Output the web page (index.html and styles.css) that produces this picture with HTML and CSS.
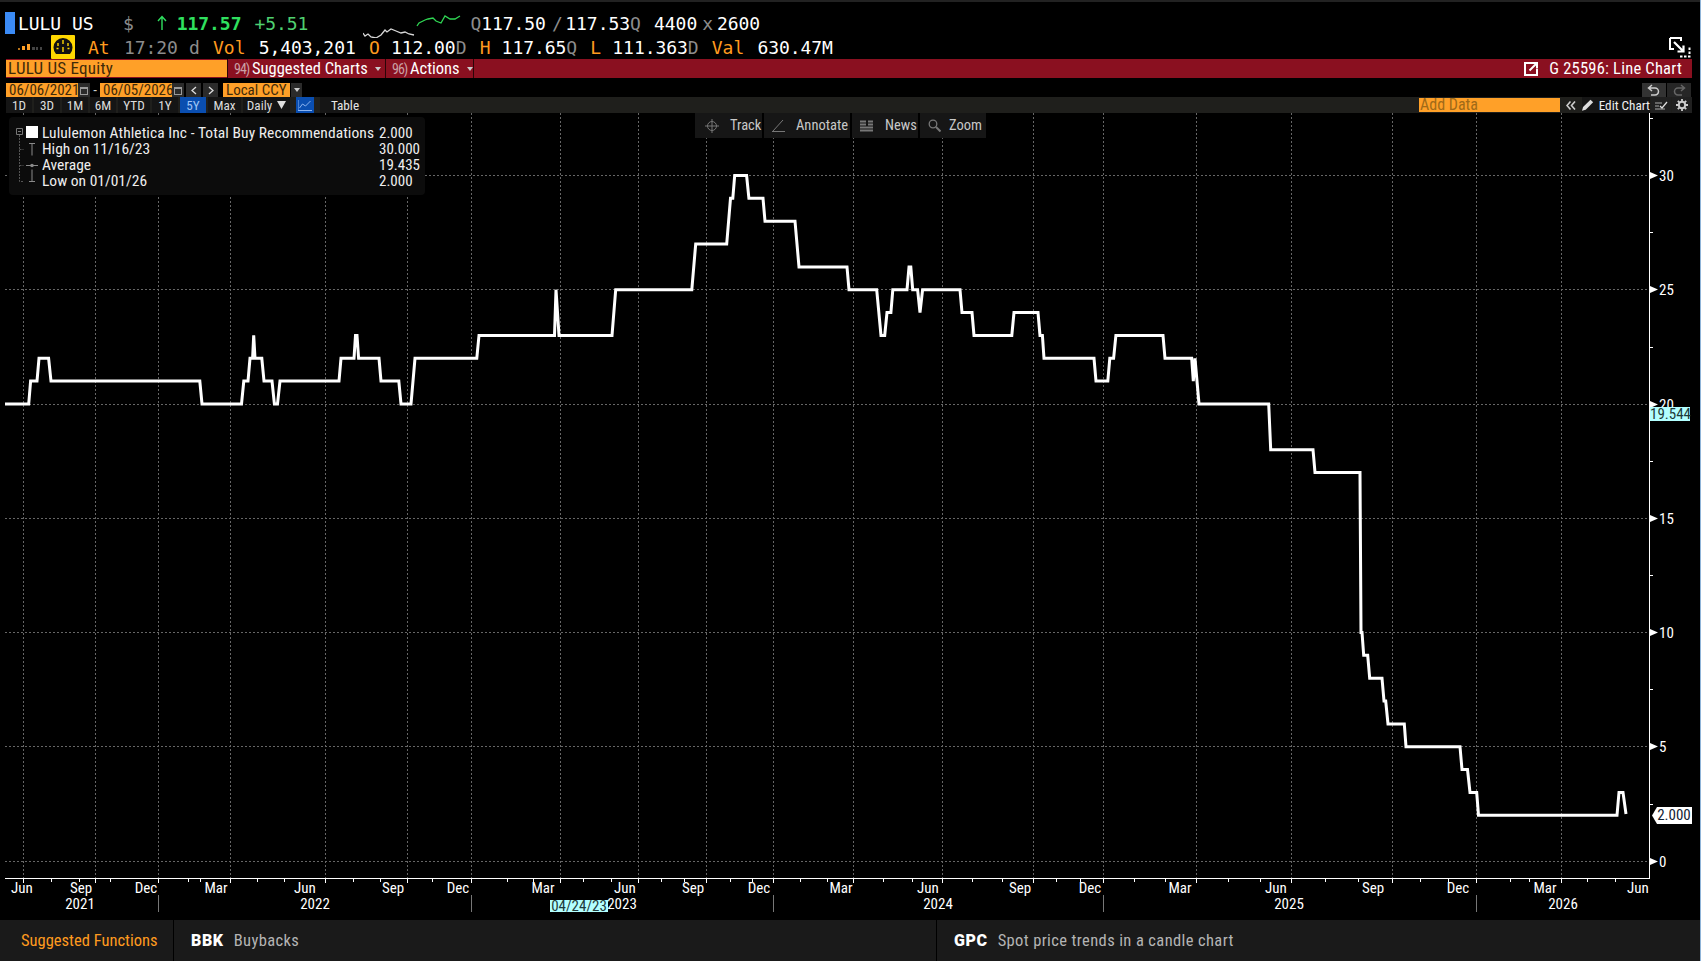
FILE: index.html
```html
<!DOCTYPE html>
<html lang="en">
<head>
<meta charset="UTF-8">
<title>LULU US Equity - Line Chart</title>
<link rel="stylesheet" href="styles.css">
</head>
<body>
<div class="page">
    <div class="top-strip"></div>

    <div class="quote-row first">
        <span class="sec-flag"></span>
        <span class="sym">LULU US</span>
        <span class="ccy dim">$</span>
        <svg class="up-arrow" width="10" height="16" viewBox="0 0 10 16"><path d="M5 15V1.500M1 6l4-4.500L9 6" fill="none" stroke="#2fe05f" stroke-width="1.400"/></svg>
        <span class="last">117.57</span>
        <span class="chg">+5.51</span>
        <svg class="spark" width="98" height="26" viewBox="364 6 98 26">
            <polyline fill="none" stroke="#d8d8d8" stroke-width="1.300" points="364,27 366,30 369,28 372,31 377,32 382,29 386,24 388,26 392,23 397,25 402,27 406,26 410,28 415,29"/>
            <polyline fill="none" stroke="#2fd653" stroke-width="1.300" points="418,20 420,17 426,14 429,13 434,12 437,15 442,17 446,10 451,13 456,13 461,10"/>
        </svg>
        <span class="bid-q dim">Q</span><span>117.50</span><span class="slash dim">/</span><span class="ask">117.53</span><span class="dim">Q</span>
        <span class="sp-md">4400</span><span class="times dim">x</span><span class="ask-size">2600</span>
    </div>

    <div class="quote-row second">
        <svg class="vol-bars" width="24" height="8" viewBox="0 0 24 8">
            <rect x="0" y="5" width="2" height="2" fill="#b8741a"/>
            <rect x="4" y="3" width="3" height="4" fill="#ffa028"/>
            <rect x="9" y="1" width="3" height="6" fill="#ffa028"/>
            <rect x="14" y="4" width="3" height="3" fill="#444"/>
            <rect x="18" y="4" width="2" height="3" fill="#444"/>
            <rect x="22" y="4" width="2" height="3" fill="#444"/>
        </svg>
        <svg class="gauge" width="24" height="24" viewBox="0 0 24 24">
            <rect width="24" height="24" rx="1" fill="#ffd800"/>
            <path d="M5 19a9.500 9.500 0 1 1 14 0z" fill="#111"/>
            <path d="M7 8v3M12 5v4M17 8v3M5.500 13.500h2M16.500 13.500h2M12 17l0-5" stroke="#ffd800" stroke-width="1.400" fill="none"/>
        </svg>
        <span class="amber at">At</span>
        <span class="dim time">17:20</span>
        <span class="dim sp-sm">d</span>
        <span class="amber sp-md">Vol</span>
        <span class="sp-md">5,403,201</span>
        <span class="amber sp-md">O</span>
        <span class="sp-sm">112.00</span><span class="dim">D</span>
        <span class="amber sp-md">H</span>
        <span class="sp-sm">117.65</span><span class="dim">Q</span>
        <span class="amber sp-md">L</span>
        <span class="sp-sm">111.363</span><span class="dim">D</span>
        <span class="amber sp-md">Val</span>
        <span class="sp-md">630.47M</span>
        <svg class="expand" width="22" height="21" viewBox="0 0 22 21">
            <path d="M1 1h11v3M1 1v11h4" fill="none" stroke="#fff" stroke-width="2"/>
            <path d="M5 5l9 9M14.500 8.500v6h-6" fill="none" stroke="#fff" stroke-width="2.200"/>
            <path d="M11 19.500h9.500V9" fill="none" stroke="#fff" stroke-width="2" stroke-dasharray="2.500 1.500"/>
        </svg>
    </div>

    <div class="red-bar">
        <div class="ticker-input">LULU US Equity</div>
        <div class="red-menu charts"><span class="num">94)</span>Suggested Charts<span class="caret"></span></div>
        <div class="red-menu actions"><span class="num">96)</span>Actions<span class="caret"></span></div>
        <div class="red-title">
            <svg width="14" height="14" viewBox="0 0 14 14"><path d="M0 0h8v2H2v10h10V7h2v7H0z" fill="#fff"/><path d="M5.500 8.500L12 2M7.500 1h5.500v5.500" fill="none" stroke="#fff" stroke-width="2"/></svg>
            <span>G 25596: Line Chart</span>
        </div>
    </div>

    <div class="date-row">
        <div class="amber-input date">06/06/2021</div>
        <div class="cal-btn"><svg width="8" height="9" viewBox="0 0 8 9"><path d="M0 1h8v8H0zM1 3v5h6V3z" fill="#9a9a9a" fill-rule="evenodd"/></svg></div>
        <span class="dash">-</span>
        <div class="amber-input date">06/05/2026</div>
        <div class="cal-btn"><svg width="8" height="9" viewBox="0 0 8 9"><path d="M0 1h8v8H0zM1 3v5h6V3z" fill="#9a9a9a" fill-rule="evenodd"/></svg></div>
        <div class="nav-btn"><svg width="6" height="9" viewBox="0 0 6 9"><path d="M5 1L1 4.500 5 8" fill="none" stroke="#ddd" stroke-width="1.300"/></svg></div>
        <div class="nav-btn"><svg width="6" height="9" viewBox="0 0 6 9"><path d="M1 1l4 3.500L1 8" fill="none" stroke="#ddd" stroke-width="1.300"/></svg></div>
        <div class="amber-input ccy-input">Local CCY</div>
        <div class="ccy-drop"><span class="caret"></span></div>
        <div class="hist-btns">
            <div class="hist-btn"><svg width="14" height="12" viewBox="0 0 14 12"><path d="M5 1L1.500 4 5 7M2 4h6a3.500 3.500 0 0 1 0 7H4" fill="none" stroke="#ccc" stroke-width="1.500"/></svg></div>
            <div class="hist-btn"><svg width="14" height="12" viewBox="0 0 14 12"><path d="M9 1l3.500 3L9 7M12 4H6a3.500 3.500 0 0 0 0 7h4" fill="none" stroke="#666" stroke-width="1.500"/></svg></div>
        </div>
    </div>

    <div class="tool-row">
        <div class="tf">1D</div>
        <div class="tf">3D</div>
        <div class="tf">1M</div>
        <div class="tf">6M</div>
        <div class="tf ytd">YTD</div>
        <div class="tf">1Y</div>
        <div class="tf on">5Y</div>
        <div class="tf max">Max</div>
        <div class="tf daily">Daily <svg width="9" height="8" viewBox="0 0 9 8"><path d="M0 0h9L4.500 8z" fill="#ddd"/></svg></div>
        <div class="tf on chart-type"><svg width="14" height="11" viewBox="0 0 14 11"><path d="M0 0v10.500h14" fill="none" stroke="#8cb4f0"/><path d="M1.500 8l3-4 3 2 5-5" fill="none" stroke="#8cb4f0"/></svg></div>
        <div class="tf table-btn">Table</div>
        <div class="add-data">Add Data</div>
        <div class="chevrons"><svg width="10" height="9" viewBox="0 0 10 9"><path d="M4.500 .5L1 4.500l3.500 4M9 .5L5.500 4.500 9 8.500" fill="none" stroke="#ccc" stroke-width="1.600"/></svg></div>
        <div class="tf edit-chart"><svg width="12" height="12" viewBox="0 0 11 11"><path d="M0 11l1-3.500L8 .5 10.500 3l-7 7z" fill="#ddd"/></svg>Edit Chart</div>
        <div class="tf icon-btn"><svg width="13" height="11" viewBox="0 0 13 11"><path d="M0 3h7M0 6h4M0 9h10" stroke="#aaa" fill="none"/><path d="M5 6l2 2 5-6" stroke="#ddd" fill="none" stroke-width="1.300"/></svg></div>
        <div class="tf icon-btn"><svg width="12" height="12" viewBox="0 0 12 12"><circle cx="6" cy="6" r="3.200" fill="none" stroke="#ccc" stroke-width="2"/><path d="M6 0v2.500M6 9.500V12M0 6h2.500M9.500 6H12M1.800 1.800l1.800 1.800M8.400 8.400l1.800 1.800M1.800 10.200l1.800-1.800M8.400 3.600l1.800-1.800" stroke="#ccc" stroke-width="1.800"/></svg></div>
    </div>

    <div class="chart">
        <svg class="plot" width="1701" height="807" viewBox="0 113 1701 807">
            <path class="grid" d="M23.500 113V878M95.500 113V878M158.500 113V878M230.500 113V878M325.500 113V878M407.500 113V878M471.500 113V878M560.500 113V878M638.500 113V878M706.500 113V878M773.500 113V878M853.500 113V878M942.500 113V878M1033.500 113V878M1103.500 113V878M1196.500 113V878M1291.500 113V878M1392.500 113V878M1476.500 113V878M1561.500 113V878"/>
            <path class="grid" d="M5 175.500H1649M5 289.500H1649M5 404.500H1649M5 518.500H1649M5 632.500H1649M5 746.500H1649M5 861.500H1649"/>

            <polyline class="series" points="5,404 28.700,404 30.600,381.100 37,381.100 39,358.300 48.600,358.300 51,381.100 199.800,381.100 202,404 241.500,404 243.800,381.100 248,381.100 250,358.300 252.600,358.300 253.700,335.400 255,358.300 261.800,358.300 264,381.100 272,381.100 274.400,404 277.500,404 280,381.100 339,381.100 341,358.300 354,358.300 355.500,335.400 357,335.400 358.600,358.300 379,358.300 381,381.100 398.800,381.100 401,404 411,404 415,358.300 476.800,358.300 479,335.400 554.500,335.400 556,289.700 559,335.400 612,335.400 615.700,289.700 691.800,289.700 695.700,244 726.700,244 730.500,198.300 732.800,198.300 734.700,175.500 746.600,175.500 748.900,198.300 763,198.300 765,221.200 795,221.200 799,266.900 847,266.900 849,289.700 876.700,289.700 881,335.400 884.700,335.400 887,312.600 890.900,312.600 892.800,289.700 907,289.700 909,266.900 910.800,266.900 912.700,289.700 917.600,289.700 920,312.600 922.600,289.700 960,289.700 962,312.600 972,312.600 974,335.400 1011.800,335.400 1014,312.600 1038,312.600 1040,335.400 1042.400,335.400 1044,358.300 1094,358.300 1096,381.100 1107.800,381.100 1109.800,358.300 1113.600,358.300 1115.900,335.400 1163,335.400 1165,358.300 1191.700,358.300 1193.300,381.100 1195,358.300 1199,404 1268.700,404 1270.700,449.700 1313,449.700 1315,472.500 1360,472.500 1361,632.500 1362,632.500 1363.700,655.300 1367.700,655.300 1369.700,678.200 1382,678.200 1384,701 1385.700,701 1388,723.900 1404.300,723.900 1406,746.700 1460,746.700 1462,769.600 1467.500,769.600 1470,792.400 1476.700,792.400 1478.500,815.300 1617,815.300 1619,792.400 1623,792.400 1626,814"/>

            <path class="axis" d="M1649.500 113V878.500H5"/>
            <path class="axis" d="M1650 118.500h3M1650 232.500h3M1650 347.500h3M1650 461.500h3M1650 575.500h3M1650 689.500h3M1650 804.500h3"/>
            <path class="axis" d="M23.500 879v4M51.500 879v3M79.500 879v3M95.500 879v4M110.500 879v3M158.500 879v4M188.500 879v3M200.500 879v3M230.500 879v4M257.500 879v3M284.500 879v3M325.500 879v4M353.500 879v3M380.500 879v3M407.500 879v4M432.500 879v3M471.500 879v4M507.500 879v3M533.500 879v3M560.500 879v4M583.500 879v3M611.500 879v3M638.500 879v4M661.500 879v3M684.500 879v3M706.500 879v4M730.500 879v3M752.500 879v3M773.500 879v4M800.500 879v3M827.500 879v3M853.500 879v4M883.500 879v3M912.500 879v3M942.500 879v4M972.500 879v3M1002.500 879v3M1033.500 879v4M1056.500 879v3M1080.500 879v3M1103.500 879v4M1134.500 879v3M1165.500 879v3M1196.500 879v4M1228.500 879v3M1260.500 879v3M1291.500 879v4M1325.500 879v3M1358.500 879v3M1392.500 879v4M1420.500 879v3M1448.500 879v3M1476.500 879v4M1510.500 879v3M1529.500 879v3M1561.500 879v4M1587.500 879v3M1615.500 879v3"/>
            <path class="year-sep" d="M158.500 895v17M471.500 895v17M773.500 895v17M1103.500 895v17M1476.500 895v17"/>
            <path class="arrow" d="M1650 172l8 3.500-8 3.500zM1650 286l8 3.500-8 3.500zM1650 401l8 3.500-8 3.500zM1650 515l8 3.500-8 3.500zM1650 629l8 3.500-8 3.500zM1650 743l8 3.500-8 3.500zM1650 858l8 3.500-8 3.500z"/>

            <g class="y-labels">
                <text x="1659" y="181">30</text>
                <text x="1659" y="295">25</text>
                <text x="1659" y="410">20</text>
                <text x="1659" y="524">15</text>
                <text x="1659" y="638">10</text>
                <text x="1659" y="752">5</text>
                <text x="1659" y="867">0</text>
            </g>
            <g class="x-labels">
                <text x="22" y="893">Jun</text><text x="81" y="893">Sep</text><text x="146" y="893">Dec</text>
                <text x="216" y="893">Mar</text><text x="305" y="893">Jun</text><text x="393" y="893">Sep</text>
                <text x="458" y="893">Dec</text><text x="543" y="893">Mar</text><text x="625" y="893">Jun</text>
                <text x="693" y="893">Sep</text><text x="759" y="893">Dec</text><text x="841" y="893">Mar</text>
                <text x="928" y="893">Jun</text><text x="1020" y="893">Sep</text><text x="1090" y="893">Dec</text>
                <text x="1180" y="893">Mar</text><text x="1276" y="893">Jun</text><text x="1373" y="893">Sep</text>
                <text x="1458" y="893">Dec</text><text x="1545" y="893">Mar</text><text x="1638" y="893">Jun</text>
                <text x="80" y="909">2021</text><text x="315" y="909">2022</text><text x="622" y="909">2023</text>
                <text x="938" y="909">2024</text><text x="1289" y="909">2025</text><text x="1563" y="909">2026</text>
            </g>
        </svg>

        <div class="float-bar">
            <div class="float-btn track"><svg width="14" height="14" viewBox="0 0 14 14"><circle cx="7" cy="7" r="4.500" fill="none" stroke="#777"/><path d="M7 0v14M0 7h14" stroke="#777"/></svg>Track</div>
            <div class="float-btn annotate"><svg width="13" height="13" viewBox="0 0 13 13"><path d="M1 12L11 1M0 12.500h13" stroke="#777" fill="none"/></svg>Annotate</div>
            <div class="float-btn news"><svg width="13" height="12" viewBox="0 0 13 12"><path d="M0 1.500h6M0 4.500h6M0 7.500h13M0 10.500h13M8 1.500h5M8 4.500h5" stroke="#777" stroke-width="2" fill="none"/></svg>News</div>
            <div class="float-btn zoom"><svg width="13" height="13" viewBox="0 0 13 13"><circle cx="5" cy="5" r="3.800" fill="none" stroke="#777" stroke-width="1.300"/><path d="M8 8l4.500 4.500" stroke="#777" stroke-width="2"/></svg>Zoom</div>
        </div>

        <div class="legend">
            <svg class="legend-tree" width="33" height="78" viewBox="0 0 33 78">
                <path d="M7.500 11.500h6v6h-6zM9 14.500h3" fill="none" stroke="#777"/>
                <path d="M10.500 18v46.500h4M10.500 32.500h4M10.500 48.500h4" fill="none" stroke="#555" stroke-dasharray="2 1"/>
                <rect x="17" y="9" width="12" height="12" fill="#fff"/>
                <path d="M20 26.500h6M23 26.500v12M17 48.500h12" fill="none" stroke="#8a8a8a"/>
                <circle cx="23" cy="48.500" r="1.800" fill="#8a8a8a"/>
                <path d="M20 64.500h6M23 52.500v12" fill="none" stroke="#8a8a8a"/>
            </svg>
            <div class="legend-name">Lululemon Athletica Inc - Total Buy Recommendations</div><div class="legend-val">2.000</div>
            <div>High on 11/16/23</div><div class="legend-val">30.000</div>
            <div>Average</div><div class="legend-val">19.435</div>
            <div>Low on 01/01/26</div><div class="legend-val">2.000</div>
        </div>

        <div class="tag now">19.544</div>
        <div class="tag last-val">2.000</div>
        <div class="tag cursor">04/24/23</div>
    </div>

    <div class="footer">
        <div class="foot-cell suggested">Suggested Functions</div>
        <div class="foot-cell bbk"><b>BBK</b>Buybacks</div>
        <div class="foot-cell"><b>GPC</b>Spot price trends in a candle chart</div>
    </div>
</div>
</body>
</html>
```

FILE: styles.css
```css
* {
    margin: 0;
    box-sizing: border-box;
}

body {
    background-color: #000;
    color: #fff;
    font-family: "Roboto Condensed", Roboto, sans-serif;
    font-stretch: condensed;
    overflow: hidden;
}

.page {
    width: 1701px;
    height: 961px;
    display: flex;
    flex-direction: column;
    border-right: 1px solid #8fb4d8;
}

.top-strip {
    height: 2px;
    background: #222;
}

/* quote header */
.quote-row {
    height: 24px;
    display: flex;
    align-items: center;
    font-family: "DejaVu Sans Mono", monospace;
    font-size: 18px;
    letter-spacing: -.05px;
    white-space: pre;
    flex-shrink: 0;
}

.quote-row.first {
    margin-top: 9px;
    padding-left: 5px;
}

.quote-row.second {
    padding-left: 18px;
    position: relative;
}

.dim { color: #8c8c8c; }
.amber { color: #ff9a1f; }
.sp-sm { margin-left: 11.2px; }
.sp-md { margin-left: 13.2px; }

.sec-flag {
    width: 10px;
    height: 22px;
    background: #3b8bf6;
}

.sym { margin-left: 3px; }
.ccy { margin-left: 29.4px; }
.up-arrow { margin-left: 23px; }
.last { margin-left: 10px; font-weight: bold; color: #2fe05f; }
.chg { margin-left: 13px; color: #4fd070; }
.spark { margin-left: 55px; margin-top: 3px; }
.bid-q { margin-left: 9px; }
.slash { margin-left: 6px; }
.ask { margin-left: 2.6px; }
.times { margin-left: 5px; }
.ask-size { margin-left: 4px; }

.gauge { margin-left: 9px; }
.at { margin-left: 13px; }
.time { margin-left: 14.4px; }

.expand {
    position: absolute;
    left: 1669px;
    top: 2px;
}

/* red security bar */
.red-bar {
    height: 19px;
    margin-left: 6px;
    width: 1686px;
    display: flex;
    align-items: stretch;
    background: #8a1020;
    font-size: 16.500px;
    flex-shrink: 0;
}

.ticker-input {
    width: 221px;
    margin: 1px 0;
    padding-left: 2px;
    background: #ffa028;
    color: #3f2a08;
    font-size: 17px;
    line-height: 17px;
    letter-spacing: .25px;
}

.red-menu {
    display: flex;
    align-items: center;
    padding-left: 6px;
    border-left: 1px solid #2a0508;
    white-space: pre;
}

.red-menu.charts { width: 158px; }
.red-menu.actions { width: 89px; border-right: 1px solid #2a0508; }

.num {
    width: 18px;
    color: #caa0a6;
    font-size: 14px;
    letter-spacing: -1px;
}

.caret {
    display: inline-block;
    border: 3px solid transparent;
    border-top: 4px solid #ccc;
    border-bottom: 0;
    margin-left: 7px;
}

.red-title {
    margin-left: auto;
    padding-right: 10px;
    display: flex;
    align-items: center;
    gap: 11px;
    letter-spacing: .22px;
}

/* dates */
.date-row {
    height: 14px;
    margin-top: 5px;
    margin-left: 6px;
    width: 1686px;
    display: flex;
    align-items: stretch;
    font-size: 15px;
    line-height: 14px;
    flex-shrink: 0;
}

.amber-input {
    background: #ffa028;
    color: #3f2a08;
    padding-left: 3px;
}

.amber-input.date { width: 72px; }
.amber-input.ccy-input { width: 67px; margin-left: 5px; }

.cal-btn, .nav-btn, .ccy-drop, .hist-btn {
    display: flex;
    align-items: center;
    justify-content: center;
    background: #2b2b2b;
}

.cal-btn { width: 12px; }
.dash { width: 10px; text-align: center; color: #ccc; }
.nav-btn { width: 15px; margin-left: 2px; }
.ccy-drop { width: 11px; margin-left: 1px; }
.ccy-drop .caret { margin-left: 0; }

.hist-btns {
    margin-left: auto;
    margin-right: 1px;
    display: flex;
    gap: 1px;
}

.hist-btn { width: 24px; background: #333; }
.hist-btn + .hist-btn { background: #262626; }

/* toolbar */
.tool-row {
    height: 16px;
    margin-left: 6px;
    width: 1686px;
    display: flex;
    gap: 2px;
    background: #1f1f1c;
    font-size: 13.200px;
    flex-shrink: 0;
}

.tf {
    width: 26px;
    display: flex;
    align-items: center;
    justify-content: center;
    background: #151515;
    color: #ddd;
    white-space: pre;
}

.tf.on { background: #0a4eb0; color: #9fc3f5; }
.tf.ytd { width: 32px; }
.tf.max { width: 33px; }
.tf.daily { width: 47px; gap: 2px; }
.tf.chart-type { width: 18px; margin-left: 4px; }
.tf.table-btn { width: 50px; margin-left: 4px; color: #e6e6e6; }

.add-data {
    width: 141px;
    margin: 1px 0 1px auto;
    padding-left: 1px;
    background: #ffa028;
    color: #a06a18;
    font-size: 16px;
    line-height: 14px;
}

.chevrons {
    width: 19px;
    margin-left: 1px;
    display: flex;
    align-items: center;
    padding-left: 3px;
}

.tf.edit-chart { width: 68px; gap: 5px; margin-left: -2px; color: #eee; }
.tf.icon-btn { width: 20px; margin-left: -1px; background: #202020; }

/* chart */
.chart {
    position: relative;
    flex: 1;
    min-height: 0;
}

.plot {
    position: absolute;
    left: 0;
    top: 0;
}

.grid {
    fill: none;
    stroke: #666;
    stroke-width: 1;
    stroke-dasharray: 2 2;
    shape-rendering: crispEdges;
}

.series {
    fill: none;
    stroke: #fff;
    stroke-width: 3;
    stroke-linejoin: miter;
    stroke-miterlimit: 3;
}

.axis {
    fill: none;
    stroke: #fff;
    stroke-width: 1;
    shape-rendering: crispEdges;
}

.year-sep {
    fill: none;
    stroke: #777;
    shape-rendering: crispEdges;
}

.arrow { fill: #fff; }

.y-labels text {
    fill: #fff;
    font-size: 15px;
}

.x-labels text {
    fill: #fff;
    font-size: 15px;
    text-anchor: middle;
}

.float-bar {
    position: absolute;
    left: 695px;
    top: 0;
    display: flex;
    gap: 2px;
    font-size: 14.500px;
    color: #c8c8c8;
}

.float-btn {
    height: 25px;
    display: flex;
    align-items: center;
    background: #161616;
    padding-left: 10px;
}

.float-btn.track { width: 67px; gap: 11px; }
.float-btn.annotate { width: 86px; gap: 11px; padding-left: 8px; }
.float-btn.news { width: 66px; gap: 12px; padding-left: 8px; }
.float-btn.zoom { width: 66px; gap: 8px; padding-left: 8px; }

.legend {
    position: absolute;
    left: 9px;
    top: 4px;
    width: 416px;
    height: 78px;
    padding: 8px 0 0 33px;
    display: grid;
    grid-template-columns: 337px auto;
    grid-auto-rows: 16px;
    align-items: center;
    background: #0c0c0c;
    border-radius: 4px;
    font-size: 15.500px;
    color: #eee;
}

.legend-name { white-space: nowrap; letter-spacing: .07px; }
.legend-val { font-size: 15px; }

.legend-tree {
    position: absolute;
    left: 0;
    top: 0;
}

.tag {
    position: absolute;
    font-size: 15px;
    line-height: 14px;
    text-align: center;
}

.tag.now {
    left: 1650px;
    top: 294px;
    width: 40px;
    background: #b3ffff;
    color: #1d3a3a;
}

.tag.last-val {
    left: 1652px;
    top: 694px;
    width: 40px;
    height: 17px;
    line-height: 17px;
    padding-left: 4px;
    background: #fff;
    color: #123;
    clip-path: polygon(5px 0, 100% 0, 100% 100%, 5px 100%, 0 50%);
}

.tag.cursor {
    left: 550px;
    top: 787px;
    width: 58px;
    background: #b3ffff;
    color: #1d3a3a;
    height: 12px;
    line-height: 12px;
}

/* suggestions */
.footer {
    height: 41px;
    display: flex;
    background: #1a1a1a;
    font-size: 16.500px;
    letter-spacing: .38px;
    color: #b4b4b4;
    flex-shrink: 0;
}

.foot-cell {
    display: flex;
    align-items: center;
    gap: 10px;
    padding-left: 17px;
    flex: 1;
}

.foot-cell b {
    color: #fff;
    font-family: Roboto, sans-serif;
    font-stretch: normal;
    font-weight: 900;
    font-size: 16px;
    letter-spacing: .6px;
}

.foot-cell.suggested {
    flex: none;
    width: 174px;
    padding-left: 21px;
    color: #ff9a1f;
    letter-spacing: 0;
    border-right: 1px solid #000;
}

.foot-cell.bbk {
    flex: none;
    width: 763px;
    border-right: 1px solid #000;
}
```
